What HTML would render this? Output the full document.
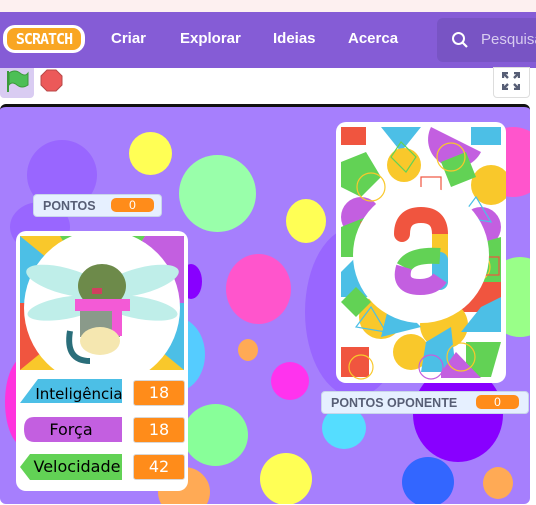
<!DOCTYPE html>
<html><head><style>
*{margin:0;padding:0;box-sizing:border-box}
body{width:536px;height:505px;overflow:hidden;background:#fff;font-family:"Liberation Sans",sans-serif;position:relative}
.a{position:absolute}
.c{position:absolute;border-radius:50%}
.nav a{position:absolute;top:30px;color:#fff;font-weight:bold;font-size:15px}
.lab{position:absolute;left:20px;height:24px;width:102px;font-family:"DejaVu Sans",sans-serif;font-size:15px;color:#000;display:flex;align-items:center;justify-content:center}
.val{position:absolute;left:133px;width:52px;height:26px;background:#ff8c1a;border:1px solid #d7d7d7;border-radius:3px;color:#fff;font-family:"DejaVu Sans",sans-serif;font-size:16px;text-align:center;line-height:24px}
.pill{background:#e6f0ff;border:1px solid #c9d6ea;border-radius:4px;color:#575e75;font-weight:bold;font-size:12.5px}
.pill span{position:absolute;background:#ff8c1a;color:#fff;font-weight:normal;border-radius:5px;text-align:center;height:14px;line-height:14px;font-size:12px}
</style></head><body>
<div class="a" style="left:0;top:0;width:536px;height:12px;background:#fdf0f0"></div>
<div class="a nav" style="left:0;top:12px;width:536px;height:56px;background:#855cd6">
 <div class="a" style="left:3px;top:13px;width:82px;height:28px;background:#fff;border-radius:12px"></div>
 <div class="a" style="left:7px;top:16px;width:74px;height:22px;background:#f9a623;border-radius:8px;color:#fff;font-family:'DejaVu Sans Mono',monospace;font-weight:bold;font-size:15px;line-height:22px;text-align:center;letter-spacing:-1px">SCRATCH</div>
 <a style="left:111px;top:18px">Criar</a><a style="left:180px;top:18px">Explorar</a><a style="left:273px;top:18px">Ideias</a><a style="left:348px;top:18px">Acerca</a>
 <div class="a" style="left:437px;top:6px;width:110px;height:44px;background:#7854c4;border-radius:6px">
  <svg class="a" style="left:14px;top:13px" width="18" height="18"><circle cx="7.5" cy="7.5" r="5.5" fill="none" stroke="#fff" stroke-width="2"/><path d="M11.5 11.5 L16 16" stroke="#fff" stroke-width="2.2"/></svg>
  <div class="a" style="left:44px;top:13px;color:#d8ccf0;font-size:15px">Pesquisa</div>
 </div>
</div>
<div class="a" style="left:0;top:68px;width:34px;height:30px;background:#d9ccf2;border-radius:0 0 4px 4px"></div>
<svg class="a" style="left:5px;top:68px" width="26" height="26"><path d="M3 3 V24" stroke="#3a9a3a" stroke-width="2"/><path d="M4 5 Q10 1 15 5 T23 5 V17 Q17 21 12 17 T4 17 Z" fill="#4cbf56" stroke="#3a9a3a"/></svg>
<svg class="a" style="left:40px;top:69px" width="24" height="24"><polygon points="7,1 16,1 22,7 22,16 16,22 7,22 1,16 1,7" fill="#ec5959" stroke="#b84848"/></svg>
<div class="a" style="left:493px;top:67px;width:37px;height:31px;border:1px solid #ddd;border-radius:0 0 4px 4px;background:#fff"></div>
<svg class="a" style="left:502px;top:72px" width="18" height="18" stroke="#575e75" stroke-width="2.4" fill="none"><path d="M1 6V1H6M1 1L6 6M12 1H17V6M17 1L12 6M1 12V17H6M1 17L6 12M17 12V17H12M17 17L12 12"/></svg>
<div class="a" style="left:0;top:104px;width:530px;height:400px;background:#a67ffd;border-top:3px solid #111;border-radius:6px;overflow:hidden">
 <div class="c" style="left:27px;top:33px;width:70px;height:70px;background:#9966ff"></div>
 <div class="c" style="left:129px;top:25px;width:43px;height:43px;background:#ffff55"></div>
 <div class="c" style="left:179px;top:48px;width:77px;height:77px;background:#99ffaa"></div>
 <div class="c" style="left:286px;top:92px;width:40px;height:44px;background:#ffff55"></div>
 <div class="c" style="left:305px;top:120px;width:100px;height:170px;background:#9966ff"></div>
 <div class="c" style="left:226px;top:147px;width:65px;height:70px;background:#ff55cc"></div>
 <div class="c" style="left:180px;top:157px;width:22px;height:35px;background:#8800ff"></div>
 <div class="c" style="left:145px;top:210px;width:60px;height:75px;background:#55ccff"></div>
 <div class="c" style="left:238px;top:232px;width:20px;height:22px;background:#ffaa55"></div>
 <div class="c" style="left:271px;top:255px;width:38px;height:38px;background:#ff33ee"></div>
 <div class="c" style="left:183px;top:297px;width:65px;height:62px;background:#88ff99"></div>
 <div class="c" style="left:322px;top:300px;width:44px;height:42px;background:#55ddff"></div>
 <div class="c" style="left:413px;top:260px;width:90px;height:95px;background:#8800ff"></div>
 <div class="c" style="left:260px;top:346px;width:52px;height:52px;background:#ffff55"></div>
 <div class="c" style="left:402px;top:350px;width:52px;height:50px;background:#3366ff"></div>
 <div class="c" style="left:483px;top:360px;width:30px;height:32px;background:#ffaa55"></div>
 <div class="c" style="left:158px;top:360px;width:52px;height:50px;background:#ffaa55"></div>
 <div class="c" style="left:478px;top:20px;width:70px;height:70px;background:#ff55cc"></div>
 <div class="c" style="left:485px;top:150px;width:70px;height:80px;background:#99ff88"></div>
 <div class="c" style="left:5px;top:250px;width:40px;height:90px;background:#ff33dd"></div>
 <div class="c" style="left:10px;top:95px;width:60px;height:50px;background:#9966ff"></div>
</div>
<div class="a pill" style="left:33px;top:194px;width:129px;height:23px"><div class="a" style="left:9px;top:4px">PONTOS</div><span style="left:77px;top:3px;width:43px">0</span></div>
<div class="a" style="left:16px;top:231px;width:172px;height:260px;background:#fff;border-radius:10px"></div>
<svg class="a" style="left:20px;top:236px" width="164" height="134">
 <rect width="164" height="134" fill="#f9c82b"/>
 <polygon points="0,0 82,67 0,67" fill="#4cbfe6"/>
 <polygon points="0,67 82,67 0,134" fill="#f0553f"/><polygon points="40,0 125,0 82,67" fill="#62d255"/>
 <polygon points="125,0 164,0 164,67 82,67" fill="#c35fe0"/><polygon points="164,67 164,134 82,67" fill="#4cbfe6"/>
 <circle cx="82" cy="72" r="78" fill="#fff"/>
 <ellipse cx="45" cy="45" rx="40" ry="13" fill="#bfeee9" transform="rotate(15 45 45)"/><ellipse cx="45" cy="72" rx="38" ry="11" fill="#bfeee9" transform="rotate(-10 45 72)"/>
 <ellipse cx="120" cy="45" rx="40" ry="13" fill="#bfeee9" transform="rotate(-15 120 45)"/><ellipse cx="120" cy="72" rx="38" ry="11" fill="#bfeee9" transform="rotate(10 120 72)"/>
 <ellipse cx="82" cy="50" rx="24" ry="22" fill="#6d8a4a"/><rect x="72" y="52" width="10" height="6" fill="#d04060"/>
 <rect x="55" y="63" width="55" height="12" fill="#f35ad6"/><rect x="60" y="75" width="40" height="26" fill="#8a9a8a"/><rect x="92" y="70" width="10" height="30" fill="#f35ad6"/>
 <ellipse cx="80" cy="105" rx="20" ry="14" fill="#f5e7b0"/><path d="M50 95 Q45 125 70 125" stroke="#2a6e7a" stroke-width="6" fill="none"/>
</svg>
<svg class="a" style="left:20px;top:378px" width="104" height="104">
 <polygon points="0,24 18,0 102,0 102,24" fill="#4cbfe6" transform="translate(0,1)"/>
 <path d="M14 39 H102 V64 H14 Q4 64 4 51 Q4 39 14 39Z" fill="#c35fe0"/>
 <polygon points="10,76 102,76 102,102 10,102 0,89" fill="#62d255"/>
</svg>
<div class="lab" style="top:382px;left:28px">Inteligência</div><div class="lab" style="top:417px;left:20px;font-size:16px">Força</div><div class="lab" style="top:454px;left:26px;font-size:16px">Velocidade</div>
<div class="val" style="top:380px">18</div><div class="val" style="top:417px">18</div><div class="val" style="top:454px">42</div>
<div class="a" style="left:336px;top:122px;width:170px;height:261px;background:#fff;border-radius:10px;overflow:hidden">
 <svg width="170" height="261"><g transform="translate(5,5)">
  <rect width="160" height="251" fill="#fff"/>
  <rect x="0" y="0" width="25" height="18" fill="#f0553f"/><polygon points="40,0 80,0 60,25" fill="#4cbfe6"/><circle cx="63" cy="38" r="17" fill="#f9c82b"/><circle cx="150" cy="58" r="20" fill="#f9c82b"/>
  <polygon points="0,35 25,25 40,50 20,70 0,60" fill="#62d255"/><path d="M90 0 A25 25 0 0 0 140 25Z" fill="#c35fe0"/><rect x="50" y="72" width="35" height="25" fill="#f0553f"/>
  <circle cx="20" cy="90" r="20" fill="#c35fe0"/><polygon points="0,100 25,90 30,130 0,130" fill="#62d255"/><polygon points="0,145 20,125 40,170 0,170" fill="#4cbfe6"/>
  <circle cx="140" cy="100" r="20" fill="#c35fe0"/><polygon points="125,120 160,110 160,160 130,160" fill="#62d255"/><rect x="115" y="155" width="45" height="30" fill="#f0553f"/>
  <circle cx="40" cy="190" r="22" fill="#f9c82b"/><circle cx="103" cy="198" r="24" fill="#f9c82b"/><polygon points="50,170 80,200 40,210" fill="#4cbfe6"/><polygon points="140,180 160,170 160,205 120,205" fill="#4cbfe6"/>
  <rect x="0" y="220" width="28" height="30" fill="#f0553f"/><circle cx="70" cy="225" r="18" fill="#f9c82b"/><polygon points="85,215 110,200 115,245 80,245" fill="#4cbfe6"/><polygon points="125,215 160,215 150,250 125,250" fill="#62d255"/><polygon points="100,245 115,225 140,251 100,251" fill="#c35fe0"/>
  <polygon points="100,35 125,25 135,50 110,60" fill="#62d255"/><rect x="130" y="0" width="30" height="18" fill="#4cbfe6"/><polygon points="0,175 15,160 30,175 15,190" fill="#62d255"/>
  <g fill="none" stroke-width="1.2"><circle cx="30" cy="60" r="14" stroke="#f9c82b"/><circle cx="110" cy="30" r="14" stroke="#f9c82b"/><rect x="20" y="95" width="20" height="20" stroke="#f0553f"/><circle cx="135" cy="140" r="14" stroke="#f9c82b"/><polygon points="15,200 30,180 45,205" stroke="#4cbfe6"/><circle cx="120" cy="230" r="14" stroke="#f9c82b"/><circle cx="60" cy="140" r="14" stroke="#c35fe0"/><rect x="80" y="50" width="20" height="20" stroke="#f0553f"/><polygon points="50,30 60,15 75,30 65,45" stroke="#62d255"/><circle cx="90" cy="240" r="12" stroke="#c35fe0"/><polygon points="120,90 135,70 150,95" stroke="#4cbfe6"/><circle cx="20" cy="240" r="12" stroke="#f9c82b"/><rect x="140" y="130" width="18" height="18" stroke="#f0553f"/></g>
 </g>
 <circle cx="85" cy="133" r="68" fill="#fff"/>
 <g fill="none" stroke-width="16">
 <path d="M66 112 Q66 93 85 93 Q104 93 104 112" stroke="#f0553f" stroke-linecap="round"/>
 <path d="M104 112 V138" stroke="#f9c82b"/>
 <path d="M104 138 V160" stroke="#4cbfe6" stroke-linecap="round"/>
 <path d="M104 134 Q75 132 68 145" stroke="#62d255"/>
 <path d="M68 145 Q62 165 84 165 Q98 165 104 156" stroke="#c35fe0"/>
 </g>
 </svg>
</div>
<div class="a pill" style="left:321px;top:391px;width:208px;height:23px"><div class="a" style="left:9px;top:4px">PONTOS OPONENTE</div><span style="left:154px;top:3px;width:43px">0</span></div>
</body></html>
